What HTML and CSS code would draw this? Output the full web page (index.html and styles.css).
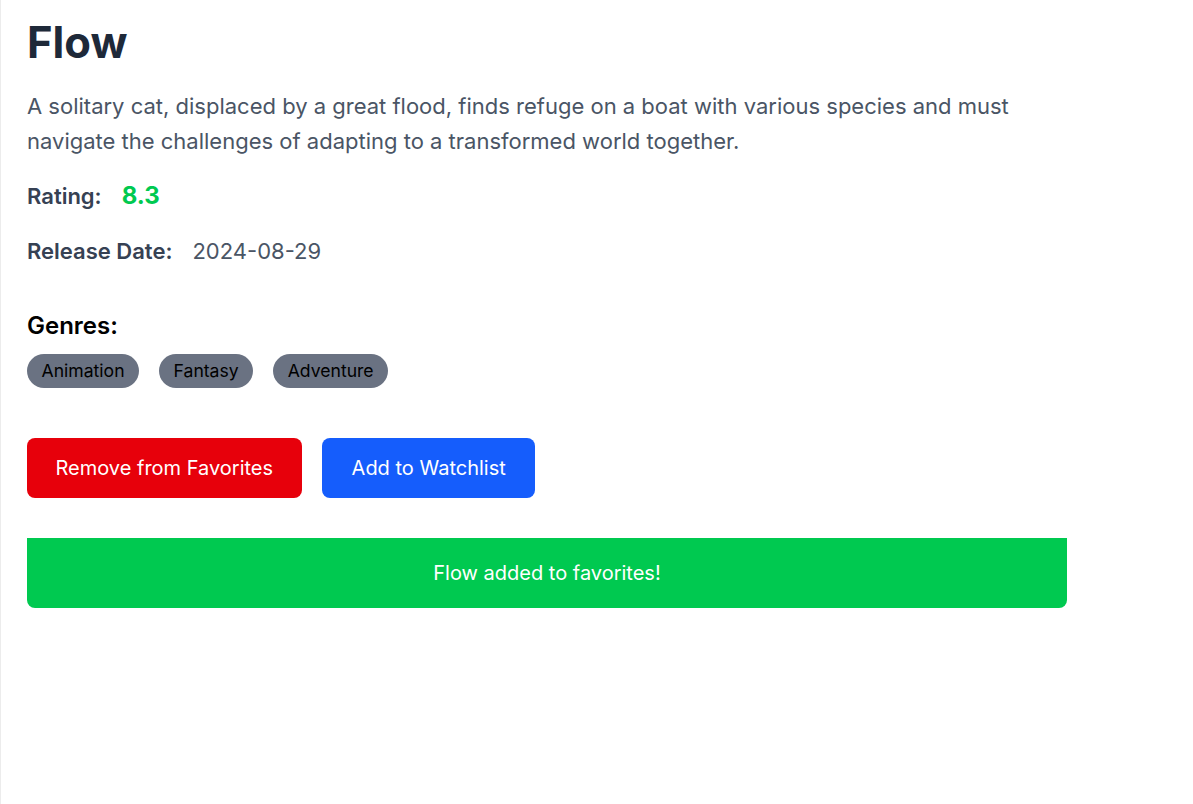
FILE: index.html
```html
<!DOCTYPE html>
<html lang="en">
<head>
<meta charset="utf-8">
<title>Flow</title>
<link rel="stylesheet" href="styles.css">
</head>
<body>
  <main class="page">
    <h1 class="title">Flow</h1>
    <p class="overview">A solitary cat, displaced by a great flood, finds refuge on a boat with various species and must navigate the challenges of adapting to a transformed world together.</p>
    <div class="meta-row rating-row">
      <span class="meta-label">Rating:</span>
      <span class="rating-value">8.3</span>
    </div>
    <div class="meta-row release-row">
      <span class="meta-label">Release Date:</span>
      <span class="meta-value">2024-08-29</span>
    </div>
    <section class="genres">
      <h2 class="genres-title">Genres:</h2>
      <div class="tag-list">
        <span class="tag">Animation</span>
        <span class="tag">Fantasy</span>
        <span class="tag">Adventure</span>
      </div>
    </section>
    <div class="actions">
      <button class="btn btn-red">Remove from Favorites</button>
      <button class="btn btn-blue">Add to Watchlist</button>
    </div>
    <div class="notice">Flow added to favorites!</div>
  </main>
</body>
</html>
```
FILE: styles.css
```css
* { box-sizing: border-box; }
html, body { margin: 0; padding: 0; height: 100%; }
body {
  font-family: Inter, "Noto Sans", "Liberation Sans", sans-serif;
  background: #ffffff;
  border-left: 1px solid #ececec;
}
.page {
  padding: 16px 26px 0;
  width: 1093px;
}
.title {
  margin: 0;
  font-size: 43.5px;
  line-height: 53px;
  font-weight: 700;
  color: #1e2939;
}
.overview {
  margin: 20px 0 0;
  font-size: 22px;
  line-height: 35.2px;
  color: #4a5565;
  width: 1040px;
}
.meta-row {
  display: flex;
  align-items: baseline;
  gap: 20px;
}
.rating-row { margin-top: 21px; }
.release-row { margin-top: 23px; }
.meta-label {
  font-size: 22px;
  font-weight: 600;
  color: #364153;
  line-height: 32px;
}
.rating-value {
  font-size: 24px;
  font-weight: 700;
  color: #00c950;
  line-height: 32px;
}
.meta-value {
  font-size: 22px;
  color: #4a5565;
  line-height: 32px;
}
.genres { margin-top: 43px; }
.genres-title {
  margin: 0;
  font-size: 24px;
  line-height: 32px;
  font-weight: 600;
  color: #000;
}
.tag-list {
  display: flex;
  gap: 20px;
  margin-top: 12px;
}
.tag {
  background: #6a7282;
  color: #000;
  font-size: 17.6px;
  line-height: 26px;
  padding: 4px 14.5px;
  border-radius: 999px;
}
.actions {
  display: flex;
  gap: 20px;
  margin-top: 50px;
}
.btn {
  border: none;
  font-family: inherit;
  font-size: 20px;
  line-height: 28px;
  padding: 16px 28.5px;
  color: #fff;
  border-radius: 8px;
  cursor: pointer;
}
.btn-red { background: #e7000b; }
.btn-blue { background: #155dfc; padding-left: 30px; padding-right: 29.5px; }
.notice {
  margin-top: 40px;
  width: 1040px;
  height: 70px;
  display: flex;
  align-items: center;
  justify-content: center;
  background: #00c950;
  color: #fff;
  font-size: 20px;
  border-radius: 0 0 8px 8px;
}
```
